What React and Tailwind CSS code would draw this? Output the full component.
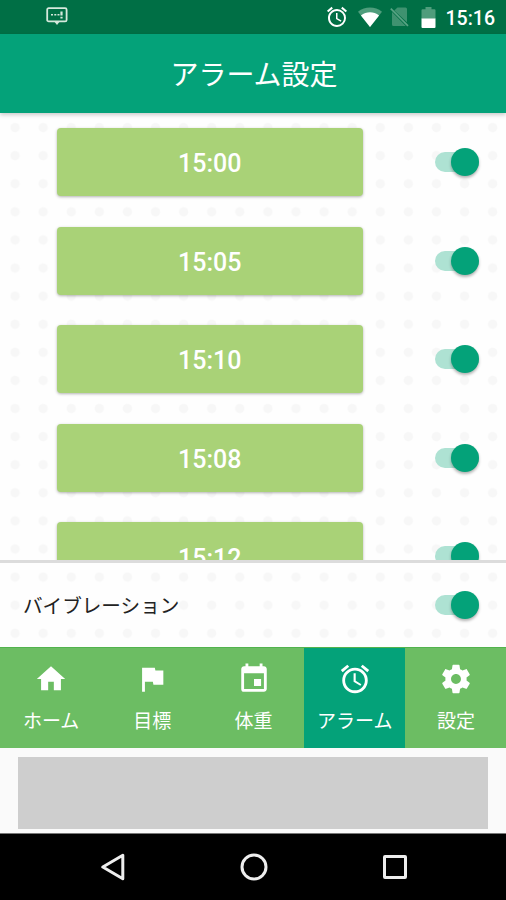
import { useState } from 'react';
import { MdHome, MdFlag, MdEvent, MdAlarm } from 'react-icons/md';

const ALARMS = ['15:00', '15:05', '15:10', '15:08', '15:12'];

const GearIcon = ({ className }) => (
  <svg viewBox="0 0 24 24" fill="currentColor" className={className}>
    <path d="M19.43 12.98c.04-.32.07-.64.07-.98s-.03-.66-.07-.98l2.11-1.65c.19-.15.24-.42.12-.64l-2-3.46c-.12-.22-.39-.3-.61-.22l-2.49 1c-.52-.4-1.08-.73-1.69-.98l-.38-2.65C14.46 2.18 14.25 2 14 2h-4c-.25 0-.46.18-.49.42l-.38 2.65c-.61.25-1.17.59-1.69.98l-2.49-1c-.23-.09-.49 0-.61.22l-2 3.46c-.13.22-.07.49.12.64l2.11 1.65c-.04.32-.07.65-.07.98s.03.66.07.98l-2.11 1.65c-.19.15-.24.42-.12.64l2 3.46c.12.22.39.3.61.22l2.49-1c.52.4 1.08.73 1.69.98l.38 2.65c.03.24.24.42.49.42h4c.25 0 .46-.18.49-.42l.38-2.65c.61-.25 1.17-.59 1.69-.98l2.49 1c.23.09.49 0 .61-.22l2-3.46c.12-.22.07-.49-.12-.64l-2.11-1.65zM12 15.5c-1.93 0-3.5-1.57-3.5-3.5s1.57-3.5 3.5-3.5 3.5 1.57 3.5 3.5-1.57 3.5-3.5 3.5z" />
  </svg>
);

const TABS = [
  { id: 'home', label: 'ホーム', icon: MdHome },
  { id: 'goal', label: '目標', icon: MdFlag },
  { id: 'weight', label: '体重', icon: MdEvent },
  { id: 'alarm', label: 'アラーム', icon: MdAlarm },
  { id: 'settings', label: '設定', icon: GearIcon }
];

const Toggle = ({ label }) => {
  const [on, setOn] = useState(true);

  return (
    <button
      role="switch"
      aria-checked={on}
      aria-label={label}
      onClick={() => setOn(!on)}
      className={`flex h-5 w-11 shrink-0 items-center rounded-full ${on ? 'justify-end bg-[#aee2d3]' : 'justify-start bg-gray-300'}`}
    >
      <span className={`h-7 w-7 shrink-0 rounded-full shadow-[0_2px_3px_rgba(0,0,0,0.3)] ${on ? 'bg-[#04a279]' : 'bg-gray-50'}`} />
    </button>
  );
};

const StatusBar = () => (
  <div className="flex h-[34px] shrink-0 items-center justify-between bg-[#006f45] pl-[46px] pr-[11px] text-white">
    <svg width="22" height="19" viewBox="0 0 22 19" className="-mt-0.5" fill="none" stroke="#d5e9dc" strokeWidth="1.8">
      <rect x="1.2" y="1.2" width="19.4" height="13.2" rx="1.5" />
      <path d="M8.5 14.8 L11 18 L13.5 14.8 Z" fill="#d5e9dc" stroke="none" />
      <path d="M5 7.8 h2 M8.3 7.8 h2 M11.5 7.8 h2" strokeWidth="1.6" />
      <path d="M15.5 4.4 v4.2 M15.5 9.8 v1.6" strokeWidth="2.2" />
    </svg>
    <div className="flex items-center">
      <MdAlarm className="h-[24px] w-[24px]" />
      {/* wifi */}
      <svg width="24" height="20" viewBox="0 0 24 20" className="ml-[9px]">
        <path d="M12 20 L0 4.8 C7 -0.8 17 -0.8 24 4.8 Z" fill="#4f9d7c" />
        <path d="M12 20 L2.9 8.4 C8.5 4.2 15.5 4.2 21.1 8.4 Z" fill="#fff" />
      </svg>
      {/* no sim */}
      <svg width="19" height="20" viewBox="0 0 19 20" className="ml-2">
        <path d="M7.5 0.5 H15.5 Q17 0.5 17 2 V15.2 L4.3 3.5 Z M2 5 L15.8 19 H3.5 Q2 19 2 17.5 Z" fill="#3f9270" />
        <path d="M0.8 1.6 L18 18.8" stroke="#5aa485" strokeWidth="1.7" />
      </svg>
      {/* battery */}
      <svg width="15" height="21" viewBox="0 0 15 21" className="ml-3">
        <path d="M4.5 0 H10.5 V2.2 H13.5 Q14.5 2.2 14.5 3.2 V12 H0.5 V3.2 Q0.5 2.2 1.5 2.2 H4.5 Z" fill="#4f9d7c" />
        <path d="M0.5 11.5 H14.5 V20 Q14.5 21 13.5 21 H1.5 Q0.5 21 0.5 20 Z" fill="#fff" />
      </svg>
      <span className="ml-2.5 mt-[3px] font-['Roboto',sans-serif] text-[19.5px] font-medium leading-none">15:16</span>
    </div>
  </div>
);

const App = () => {
  const [tab, setTab] = useState('alarm');

  return (
    <div className="flex h-[900px] w-[506px] flex-col overflow-hidden bg-[#fafafa] font-['Noto_Sans_CJK_JP',sans-serif]">
      <StatusBar />
      <header className="z-10 flex h-[79px] shrink-0 items-center justify-center bg-[#04a279] pb-0.5 pl-0.5 shadow-[0_2px_4px_rgba(0,0,0,0.2)]">
        <h1 className="text-[28px] leading-none text-white">アラーム設定</h1>
      </header>

      <main className="flex h-[534px] shrink-0 flex-col bg-[#fefefe] bg-[radial-gradient(circle,#f7f7f7_4px,transparent_5.2px)] bg-[length:28.1px_28.1px] bg-[position:1px_0.5px]">
        <div className="flex h-[447px] flex-col gap-[30.6px] overflow-hidden pt-[15px]">
          {ALARMS.map((time) => (
            <div key={time} className="flex h-[68px] shrink-0 items-center justify-between pl-[57px] pr-[27px]">
              <button className="h-[68px] w-[305.5px] rounded-[4px] bg-[#a9d277] pt-1 font-['Roboto',sans-serif] text-[25px] font-medium text-white shadow-[0_1px_3px_rgba(0,0,0,0.3)]">
                {time}
              </button>
              <Toggle label={time} />
            </div>
          ))}
        </div>
        <div className="flex grow items-center justify-between border-t-[3px] border-[#dcdcdc] pl-[23px] pr-[27px]">
          <span className="text-[19.6px] leading-none text-[#222]">バイブレーション</span>
          <Toggle label="バイブレーション" />
        </div>
      </main>

      <nav className="flex h-[101px] shrink-0 border-t border-[#52b34d]">
        {TABS.map(({ id, label, icon: Icon }) => (
          <button
            key={id}
            onClick={() => setTab(id)}
            className={`flex flex-1 flex-col items-center pl-px pt-3.5 text-white ${tab === id ? 'bg-[#04a279]' : 'bg-[#6cbd63]'}`}
          >
            <Icon className="h-[34px] w-[34px]" />
            <span className="mt-3.5 text-[19px] leading-none">{label}</span>
          </button>
        ))}
      </nav>

      {/* ad banner */}
      <div className="h-[85px] shrink-0 px-[18px] pb-1 pt-[9px]">
        <div className="h-full bg-[#cecece]" />
      </div>

      <div className="flex grow items-center justify-center gap-[115px] border-t border-[#777] bg-black pl-px">
        <svg width="24" height="28" viewBox="0 0 24 28" fill="none" stroke="#eee" strokeWidth="3" strokeLinejoin="round">
          <path d="M21.8 2.3 V25.7 L1.8 14 Z" />
        </svg>
        <svg width="28" height="28" viewBox="0 0 28 28" fill="none" stroke="#eee" strokeWidth="3">
          <circle cx="14" cy="14" r="12" />
        </svg>
        <svg width="24" height="24" viewBox="0 0 24 24" fill="none" stroke="#eee" strokeWidth="3">
          <rect x="1.5" y="1.5" width="21" height="21" rx="0.5" />
        </svg>
      </div>
    </div>
  );
};

export default App;
